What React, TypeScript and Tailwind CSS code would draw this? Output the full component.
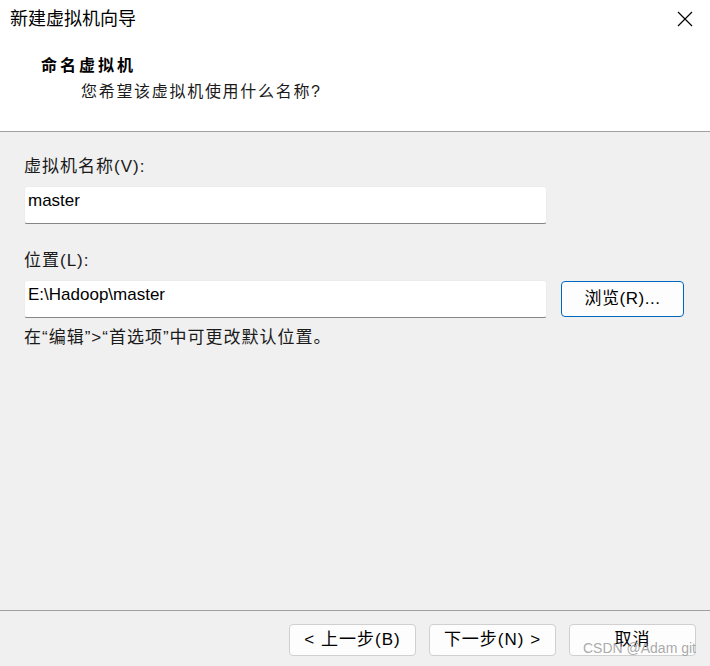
import React from 'react';

const font = "font-['Liberation_Sans','Noto_Sans_CJK_SC',sans-serif]";

const WizardButton = ({ children }: { children: React.ReactNode }) => (
  <button className="flex h-[32px] w-[127px] items-center justify-center rounded-[4px] border border-[#d0d0d0] bg-[#fdfdfd] text-[17px] tracking-[1px] text-black">
    {children}
  </button>
);

export default function App() {
  return (
    <div className={`relative flex h-[666px] w-[710px] flex-col overflow-hidden bg-[#f0f0f0] ${font}`}>
      {/* 헤더 */}
      <div className="h-[131px] bg-white">
        <div className="flex h-[38px] items-center justify-between pl-[10px] pr-[17px]">
          <span className="text-[18px] leading-[20px] text-black">新建虚拟机向导</span>
          <svg width="16" height="16" viewBox="0 0 16 16" className="text-black">
            <path d="M1 1 L15 15 M15 1 L1 15" stroke="currentColor" strokeWidth="1.2" />
          </svg>
        </div>
        <div className="mt-[18px] pl-[41px] text-[16px] font-bold leading-[20px] tracking-[3px] text-black">
          命名虚拟机
        </div>
        <div className="mt-[6px] pl-[81px] text-[16px] leading-[20px] tracking-[1.7px] text-[#1a1a1a]">
          您希望该虚拟机使用什么名称?
        </div>
      </div>
      <div className="h-px bg-[#a0a0a0]" />

      {/* 본문 */}
      <div className="flex flex-1 flex-col px-6 pt-[25px]">
        <div className="text-[17px] leading-[20px] tracking-[1px] text-[#1a1a1a]">虚拟机名称(V):</div>
        <div className="mt-[9px] flex h-[38px] w-[523px] items-start rounded-[3px] border border-[#ececec] border-b-[#868686] bg-white pl-[3px] pt-[2px] text-[17px] leading-[24px] text-black">
          master
        </div>

        <div className="mt-[27px] text-[17px] leading-[20px] tracking-[1px] text-[#1a1a1a]">位置(L):</div>
        <div className="mt-[9px] flex items-start gap-[14px]">
          <div className="flex h-[38px] w-[523px] items-start rounded-[3px] border border-[#ececec] border-b-[#868686] bg-white pl-[3px] pt-[2px] text-[17px] leading-[24px] text-black">
            E:\Hadoop\master
          </div>
          <button className="mt-px flex h-[36px] w-[123px] items-center justify-center rounded-[4px] border border-[#0067c0] bg-[#fdfdfd] text-[17px] tracking-[0.5px] text-black">
            浏览(R)...
          </button>
        </div>

        <div className="mt-[10px] text-[17px] leading-[20px] tracking-[1px] text-[#1a1a1a]">
          在“编辑”&gt;“首选项”中可更改默认位置。
        </div>
      </div>

      {/* 하단 버튼 */}
      <div className="h-px bg-[#a0a0a0]" />
      <div className="flex h-[55px] justify-end gap-[13px] pr-[14px] pt-[13px]">
        <WizardButton>&lt; 上一步(B)</WizardButton>
        <WizardButton>下一步(N) &gt;</WizardButton>
        <WizardButton>取消</WizardButton>
      </div>

      <div className="pointer-events-none absolute bottom-[10px] right-[14px] text-[14px] leading-[16px] text-[#a0a0a0]/90">
        CSDN @Adam git
      </div>
    </div>
  );
}
